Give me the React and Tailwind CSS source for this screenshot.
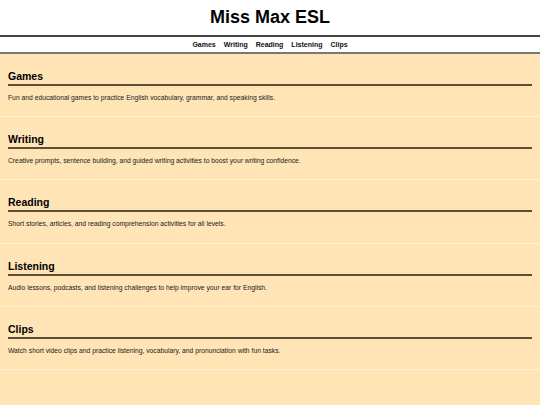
import React from 'react';

const sections = [
    { id: 'games', title: 'Games', text: 'Fun and educational games to practice English vocabulary, grammar, and speaking skills.' },
    { id: 'writing', title: 'Writing', text: 'Creative prompts, sentence building, and guided writing activities to boost your writing confidence.' },
    { id: 'reading', title: 'Reading', text: 'Short stories, articles, and reading comprehension activities for all levels.' },
    { id: 'listening', title: 'Listening', text: 'Audio lessons, podcasts, and listening challenges to help improve your ear for English.' },
    { id: 'clips', title: 'Clips', text: 'Watch short video clips and practice listening, vocabulary, and pronunciation with fun tasks.' },
];

const App = () => {
    return (
        <div className="min-h-screen bg-[#ffe4b5] font-['Liberation_Sans',Arial,sans-serif]">
            <header className="bg-white">
                <h1 className="h-[35px] flex items-center justify-center text-[18px] font-bold text-black">Miss Max ESL</h1>
                <nav className="h-[19px] border-t-2 border-b-2 border-t-[#444] border-b-[#777] flex items-center justify-center gap-[8px]">
                    {sections.map((s) => (
                        <a key={s.id} href={'#' + s.id} className="text-[7px] font-bold text-[#111] leading-none">
                            {s.title}
                        </a>
                    ))}
                </nav>
            </header>
            <main>
                {sections.map((s) => (
                    <section key={s.id} id={s.id} className="h-[63.2px] px-2 pt-[16px] border-b border-[#fff1d8]">
                        <h2 className="text-[10.5px] leading-[12px] font-bold text-black pb-[2px] border-b-2 border-[#5e4e36]">
                            {s.title}
                        </h2>
                        <p className="mt-[7px] text-[6.75px] leading-[9px] text-[#222]">{s.text}</p>
                    </section>
                ))}
            </main>
        </div>
    );
};

export default App;
